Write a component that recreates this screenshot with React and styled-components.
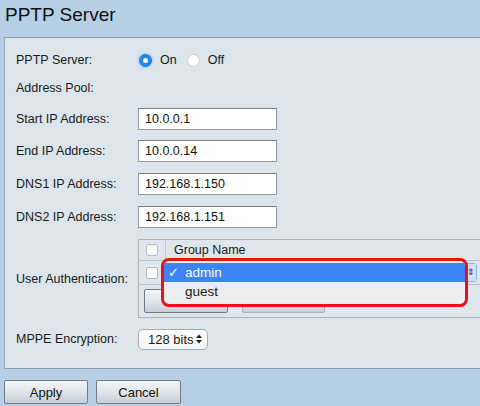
import React from 'react';
import styled, { createGlobalStyle } from 'styled-components';

const GlobalStyle = createGlobalStyle`
  html, body {
    margin: 0;
    padding: 0;
    background: #b6cfe4;
    overflow: hidden;
  }
  body {
    font-family: "Liberation Sans", Arial, Helvetica, sans-serif;
    font-size: 12.5px;
    color: #1a1a1a;
  }
`;

const Page = styled.div`
  width: 480px;
  height: 406px;
  background: #b6cfe4;
`;

const TitleBar = styled.div`
  height: 37px;
  padding: 4px 0 0 5px;
  box-sizing: border-box;
`;

const Title = styled.h1`
  margin: 0;
  font-size: 19px;
  line-height: 22px;
  font-weight: normal;
  color: #111;
`;

const Panel = styled.div`
  margin-left: 4px;
  height: 332px;
  box-sizing: border-box;
  background: #dbe5eb;
  border-top: 1px solid #8d9dab;
  border-left: 1px solid #9aa8b3;
  border-bottom: 1px solid #8d9dab;
  padding: 11px 0 0 11px;
`;

const Row = styled.div`
  display: flex;
  align-items: center;
  min-height: 22px;
  margin-top: ${(p) => p.$mt ?? 0}px;
`;

const Label = styled.div`
  width: 122px;
  flex: none;
`;

const TextInput = styled.input`
  width: 139px;
  height: 22px;
  box-sizing: border-box;
  border: 1px solid #9a9a9a;
  border-top-color: #7f7f7f;
  background: #fff;
  padding: 0 6px;
  font-family: inherit;
  font-size: 12.5px;
  color: #111;
  outline: none;
`;

const RadioGroup = styled.div`
  display: flex;
  align-items: center;
  margin-left: 1px;
`;

const Radio = styled.span`
  width: 13px;
  height: 13px;
  border-radius: 50%;
  box-sizing: border-box;
  display: inline-flex;
  align-items: center;
  justify-content: center;
  background: ${(p) => (p.$checked ? '#1f88f0' : '#fff')};
  border: 1px solid ${(p) => (p.$checked ? '#1a7ee6' : '#c9cdd0')};
  box-shadow: ${(p) => (p.$checked ? '0 0 2px 1px rgba(80,160,240,0.35)' : 'none')};
  &::after {
    content: '';
    width: 5px;
    height: 5px;
    border-radius: 50%;
    background: #fff;
    display: ${(p) => (p.$checked ? 'block' : 'none')};
  }
`;

const RadioText = styled.span`
  margin: 0 ${(p) => p.$after}px 0 8px;
`;

const TableWrap = styled.div`
  position: relative;
  width: 346px;
  flex: none;
`;

const Table = styled.div`
  border: 1px solid #a9b5bf;
  background: #dfe7ec;
`;

const TRow = styled.div`
  display: flex;
  height: ${(p) => p.$h}px;
  border-bottom: ${(p) => (p.$last ? 'none' : '1px solid #b6c1ca')};
`;

const CheckCell = styled.div`
  width: 26px;
  flex: none;
  display: flex;
  align-items: center;
  justify-content: center;
  border-right: 1px solid #c3ccd3;
`;

const Checkbox = styled.span`
  width: 12px;
  height: 12px;
  box-sizing: border-box;
  border: 1px solid #b5b9bc;
  border-radius: 2px;
  background: #fbfbfb;
`;

const NameCell = styled.div`
  flex: 1;
  display: flex;
  align-items: center;
  padding-left: 8px;
`;

const SelectCell = styled.div`
  flex: 1;
  display: flex;
  align-items: center;
  padding: 0 6px 0 2px;
`;

const InlineSelect = styled.div`
  flex: 1;
  height: 17px;
  background: #fff;
  border: 1px solid #8fb4e6;
  border-radius: 3px;
  display: flex;
  justify-content: flex-end;
`;

const Stepper = styled.span`
  width: 10px;
  background: #cfe0f6;
  font-size: 9px;
  line-height: 17px;
  text-align: center;
  color: #333;
`;

const ButtonRow = styled.div`
  display: flex;
  align-items: center;
  gap: 14px;
  padding-left: 5px;
  height: 100%;
`;

const Button = styled.button`
  width: ${(p) => p.$w}px;
  height: 24px;
  border: 1px solid #6f7b86;
  border-radius: 2px;
  background: linear-gradient(#f5f7f9, #dde3e8 55%, #c5ced6);
  font-family: inherit;
  font-size: 13px;
  color: ${(p) => (p.disabled ? '#9aa3aa' : '#111')};
  border-color: ${(p) => (p.disabled ? '#a9b3bb' : '#6f7b86')};
  padding: 0;
`;

const Menu = styled.div`
  position: absolute;
  left: 23px;
  top: 19px;
  width: 307px;
  height: 49px;
  box-sizing: border-box;
  border: 3.5px solid #e8121b;
  border-radius: 8px;
  background: #eceeef;
  padding-top: 2px;
  overflow: hidden;
`;

const MenuItem = styled.div`
  height: 19px;
  display: flex;
  align-items: center;
  font-size: 13.5px;
  background: ${(p) => (p.$selected ? '#3d84f6' : 'transparent')};
  color: ${(p) => (p.$selected ? '#fff' : '#1a1a1a')};
`;

const Check = styled.span`
  width: 17px;
  padding-left: 4px;
  font-family: "DejaVu Sans", sans-serif;
  font-size: 13px;
  font-weight: bold;
`;

const SmallSelect = styled.div`
  width: 70px;
  height: 21px;
  box-sizing: border-box;
  border: 1px solid #a9adb1;
  border-radius: 5px;
  background: linear-gradient(#ffffff, #f3f3f3);
  display: flex;
  align-items: center;
  justify-content: space-between;
  padding: 0 5px 0 9px;
  font-size: 13px;
`;

const Arrows = styled.svg`
  width: 6px;
  height: 10px;
`;

const Actions = styled.div`
  display: flex;
  gap: 8px;
  padding: 11px 0 0 4px;
`;

function Updown() {
  return (
    <Arrows viewBox="0 0 6 10">
      <path d="M0 4 L3 0.5 L6 4 Z M0 6 L3 9.5 L6 6 Z" fill="#222" />
    </Arrows>
  );
}

export default function App() {
  return (
    <Page>
      <GlobalStyle />
      <TitleBar>
        <Title>PPTP Server</Title>
      </TitleBar>
      <Panel>
        <Row>
          <Label>PPTP Server:</Label>
          <RadioGroup>
            <Radio $checked />
            <RadioText $after={10}>On</RadioText>
            <Radio />
            <RadioText $after={0}>Off</RadioText>
          </RadioGroup>
        </Row>
        <Row $mt={6}>
          <Label>Address Pool:</Label>
        </Row>
        <Row $mt={9}>
          <Label>Start IP Address:</Label>
          <TextInput defaultValue="10.0.0.1" />
        </Row>
        <Row $mt={10}>
          <Label>End IP Address:</Label>
          <TextInput defaultValue="10.0.0.14" />
        </Row>
        <Row $mt={11}>
          <Label>DNS1 IP Address:</Label>
          <TextInput defaultValue="192.168.1.150" />
        </Row>
        <Row $mt={11}>
          <Label>DNS2 IP Address:</Label>
          <TextInput defaultValue="192.168.1.151" />
        </Row>
        <Row $mt={11}>
          <Label>User Authentication:</Label>
          <TableWrap>
            <Table>
              <TRow $h={20}>
                <CheckCell><Checkbox /></CheckCell>
                <NameCell>Group Name</NameCell>
              </TRow>
              <TRow $h={23}>
                <CheckCell><Checkbox /></CheckCell>
                <SelectCell>
                  <InlineSelect>
                    <Stepper>⇕</Stepper>
                  </InlineSelect>
                </SelectCell>
              </TRow>
              <TRow $h={32} $last>
                <ButtonRow>
                  <Button $w={84}>Add</Button>
                  <Button $w={83} disabled>Delete</Button>
                </ButtonRow>
              </TRow>
            </Table>
            <Menu>
              <MenuItem $selected>
                <Check>✓</Check>admin
              </MenuItem>
              <MenuItem>
                <Check />guest
              </MenuItem>
            </Menu>
          </TableWrap>
        </Row>
        <Row $mt={10}>
          <Label>MPPE Encryption:</Label>
          <SmallSelect>
            128 bits
            <Updown />
          </SmallSelect>
        </Row>
      </Panel>
      <Actions>
        <Button $w={84}>Apply</Button>
        <Button $w={85}>Cancel</Button>
      </Actions>
    </Page>
  );
}
